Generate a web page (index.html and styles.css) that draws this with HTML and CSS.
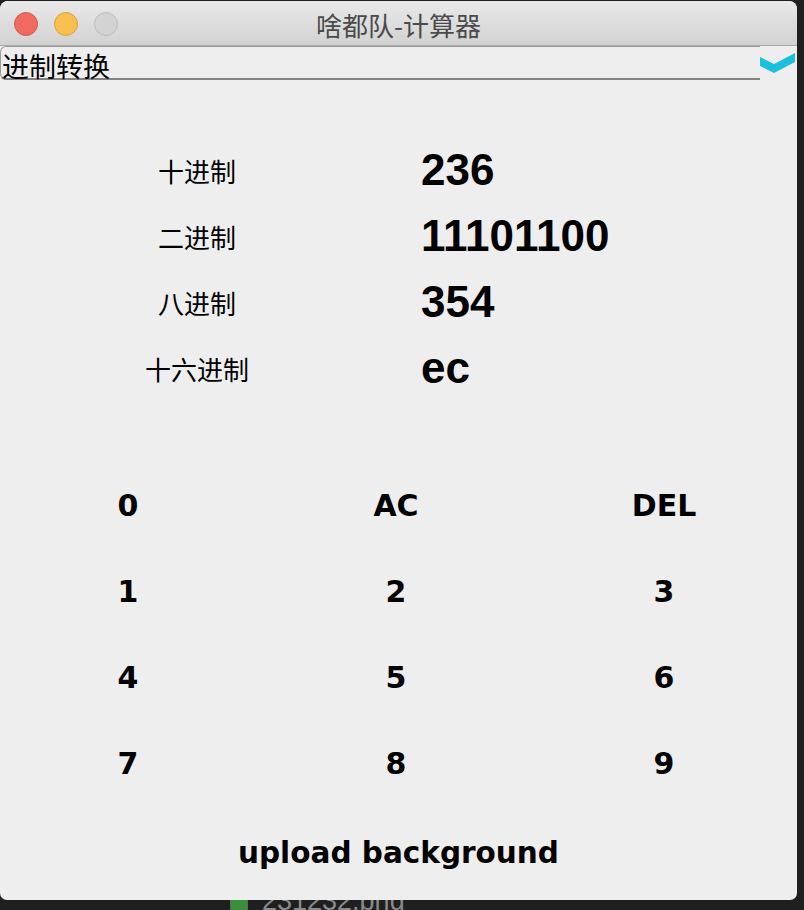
FILE: index.html
```html
<!DOCTYPE html>
<html>
<head>
<meta charset="utf-8">
<link rel="stylesheet" href="styles.css">
</head>
<body>
<div class="desktop">
  <div class="desk-file">
    <span class="desk-icon"></span>
    <span class="desk-name">231232.png</span>
  </div>
</div>
<div class="window">
  <div class="titlebar">
    <div class="lights">
      <span class="light red"></span>
      <span class="light yellow"></span>
      <span class="light gray"></span>
    </div>
    <div class="title">啥都队-计算器</div>
  </div>
  <div class="combo-row">
    <div class="combo"><span class="combo-text">进制转换</span></div>
    <svg class="chevron" width="37" height="22" viewBox="0 0 37 22">
      <polygon points="0,4 14,11 35,0 35,9 14,20 0,13" fill="#1dbfdf"/>
    </svg>
  </div>
  <div class="values">
    <div class="label">十进制</div><div class="value">236</div>
    <div class="label">二进制</div><div class="value">11101100</div>
    <div class="label">八进制</div><div class="value">354</div>
    <div class="label">十六进制</div><div class="value">ec</div>
  </div>
  <div class="keys">
    <div class="key">0</div><div class="key">AC</div><div class="key">DEL</div>
    <div class="key">1</div><div class="key">2</div><div class="key">3</div>
    <div class="key">4</div><div class="key">5</div><div class="key">6</div>
    <div class="key">7</div><div class="key">8</div><div class="key">9</div>
  </div>
  <div class="upload">upload background</div>
</div>
</body>
</html>
```
FILE: styles.css
```css
html, body {
  margin: 0;
  padding: 0;
}
body {
  width: 804px;
  height: 910px;
  overflow: hidden;
  background: #1f1f1f;
  position: relative;
  padding-top: 1px;
  box-sizing: border-box;
}
.desktop {
  position: absolute;
  left: 0;
  top: 0;
  width: 804px;
  height: 910px;
  z-index: 0;
}
.desk-file {
  position: absolute;
  left: 230px;
  top: 886px;
  display: flex;
  align-items: center;
  gap: 14px;
}
.desk-icon {
  width: 16px;
  height: 26px;
  background: linear-gradient(#2a8cc0 0 40%, #3a8f3a 40% 100%);
  border: 1px solid #666;
}
.desk-name {
  font-family: "Liberation Sans", sans-serif;
  font-size: 27px;
  color: #8a8a8a;
}
.window {
  position: relative;
  z-index: 1;
  width: 797px;
  height: 899px;
  background: #eeeeee;
  border-radius: 8px 8px 7px 7px;
  overflow: hidden;
}
.titlebar {
  height: 44px;
  background: linear-gradient(#e9e9e9, #d2d2d2);
  border-bottom: 1px solid #a9a9a9;
  position: relative;
  display: flex;
  align-items: center;
  justify-content: center;
}
.lights {
  position: absolute;
  left: 14px;
  top: 11px;
  display: flex;
  gap: 16px;
}
.light {
  width: 22px;
  height: 22px;
  border-radius: 50%;
  border: 1px solid;
}
.light.red { background: #ef6b60; border-color: #d9574d; }
.light.yellow { background: #f7bf4f; border-color: #dca33c; }
.light.gray { background: #d3d3d3; border-color: #bdbdbd; }
.title {
  font-family: "Noto Sans CJK SC", sans-serif;
  font-size: 26px;
  line-height: 30px;
  color: #4a4a4a;
  margin-top: 4px;
}
.combo-row {
  display: flex;
  align-items: flex-start;
  height: 35px;
}
.combo {
  width: 760px;
  height: 34px;
  box-sizing: border-box;
  border-top: 1px solid #9c9c9c;
  border-left: 1px solid #9c9c9c;
  border-bottom: 2px solid #828282;
  border-radius: 6px 0 0 6px;
  display: flex;
  align-items: flex-end;
}
.combo-text {
  font-family: "Noto Sans CJK SC", sans-serif;
  font-size: 27px;
  line-height: 27px;
  color: #000;
  padding-left: 1px;
  margin-bottom: -1px;
}
.chevron {
  display: block;
  margin-top: 7px;
}
.values {
  margin-top: 56px;
  display: grid;
  grid-template-columns: 394px 1fr;
  grid-auto-rows: 66px;
  align-items: center;
}
.label {
  text-align: center;
  font-family: "Noto Sans CJK SC", sans-serif;
  font-size: 26px;
  color: #000;
}
.value {
  padding-left: 27px;
  font-family: "Liberation Sans", Arial, sans-serif;
  font-weight: bold;
  font-size: 44px;
  color: #000;
}
.keys {
  margin-top: 61px;
  margin-left: -6px;
  width: 804px;
  display: grid;
  grid-template-columns: repeat(3, 268px);
  grid-auto-rows: 86px;
  align-items: center;
}
.key, .upload {
  text-align: center;
  font-family: "DejaVu Sans", sans-serif;
  font-weight: bold;
  font-size: 30px;
  color: #000;
}
.upload {
  height: 94px;
  display: flex;
  align-items: center;
  justify-content: center;
  font-size: 29.5px;
}
```
